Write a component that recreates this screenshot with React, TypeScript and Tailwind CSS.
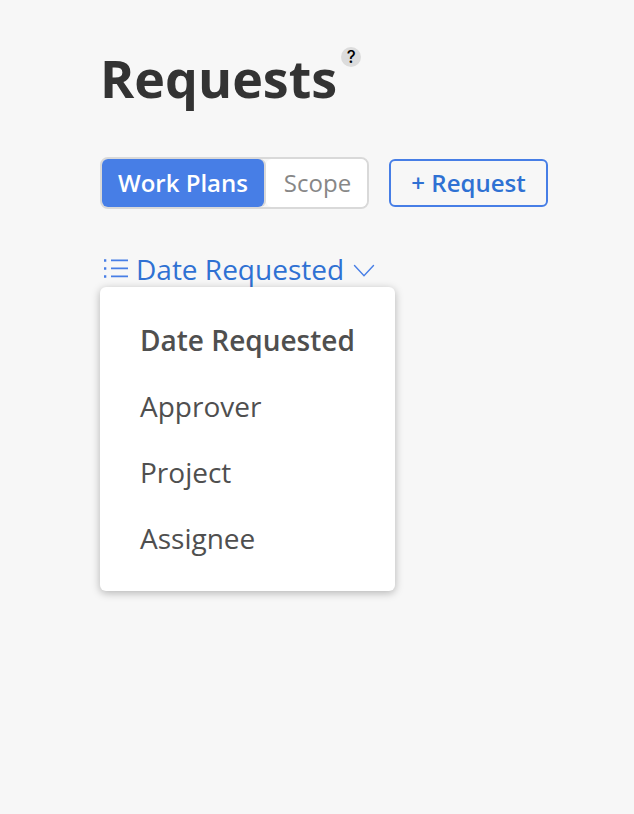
import { useState } from 'react';

const tabs = ['Work Plans', 'Scope'];
const sortOptions = ['Date Requested', 'Approver', 'Project', 'Assignee'];

function ListIcon() {
  return (
    <svg width="26" height="20" viewBox="0 0 26 20" fill="none" stroke="#477ee6" strokeWidth="1.8">
      <path d="M8 1.4H25M8 9.4H25M8 17.4H25" />
      <path d="M1 1.5H3.3M1 9.5H3.3M1 17.5H3.3" strokeWidth="2.4" />
    </svg>
  );
}

function ChevronIcon() {
  return (
    <svg width="22" height="14" viewBox="0 0 22 14" fill="none" stroke="#477ee6" strokeWidth="1.4" strokeLinecap="round">
      <path d="M1.5 1.5L11 11.8L20.5 1.5" />
    </svg>
  );
}

export default function App() {
  const [tab, setTab] = useState('Work Plans');
  const [sortBy, setSortBy] = useState('Date Requested');
  const [open, setOpen] = useState(true);

  return (
    <main className="min-h-screen bg-[#f7f7f7] pl-[100px] pt-[42px] font-['Open_Sans',sans-serif]">
      <header className="flex items-start">
        <h1 className="text-[52px] leading-[72px] font-bold text-[#333333]">Requests</h1>
        <button aria-label="Help" className="ml-1 mt-[5px] flex size-5 items-center justify-center rounded-full bg-[#dcdcdc] font-['Inter',sans-serif] text-[17px] leading-5 font-medium text-black">
          ?
        </button>
      </header>

      <div className="mt-[43px] flex items-center gap-5">
        <div className="flex h-[52px] w-[269px] rounded-lg border-2 border-[#d9d9d9]">
          {tabs.map((name) => (
            <button
              key={name}
              onClick={() => setTab(name)}
              className={
                tab === name
                  ? 'mr-[2px] w-[162px] rounded-md bg-[#477ee6] text-2xl font-semibold text-white shadow-[2px_0_0_#d9d9d9]'
                  : 'flex-1 rounded-md bg-white pl-[2px] text-2xl text-[#878787]'
              }
            >
              {name}
            </button>
          ))}
        </div>
        <button className="h-12 w-[159px] rounded-md border-2 border-[#477ee6] text-2xl font-semibold text-[#2f71d3]">
          + Request
        </button>
      </div>

      <div className="relative mt-[42px] w-fit">
        <button onClick={() => setOpen(!open)} className="flex h-9 items-center pl-[3px] text-[28px] leading-9 text-[#2f71d3]">
          <ListIcon />
          <span className="ml-[7px]">Date Requested</span>
          <span className="ml-[9px] mt-[3px]">
            <ChevronIcon />
          </span>
        </button>
        {open && (
          <ul className="absolute top-9 left-0 w-[295px] rounded-md bg-white py-5 shadow-[0_2px_8px_rgba(0,0,0,0.28)]">
            {sortOptions.map((option) => (
              <li key={option}>
                <button
                  onClick={() => setSortBy(option)}
                  className={`h-[66px] w-full pl-10 text-left text-[28px] whitespace-nowrap text-[#4f4f4f] ${sortBy === option ? 'font-semibold' : ''}`}
                >
                  {option}
                </button>
              </li>
            ))}
          </ul>
        )}
      </div>
    </main>
  );
}
